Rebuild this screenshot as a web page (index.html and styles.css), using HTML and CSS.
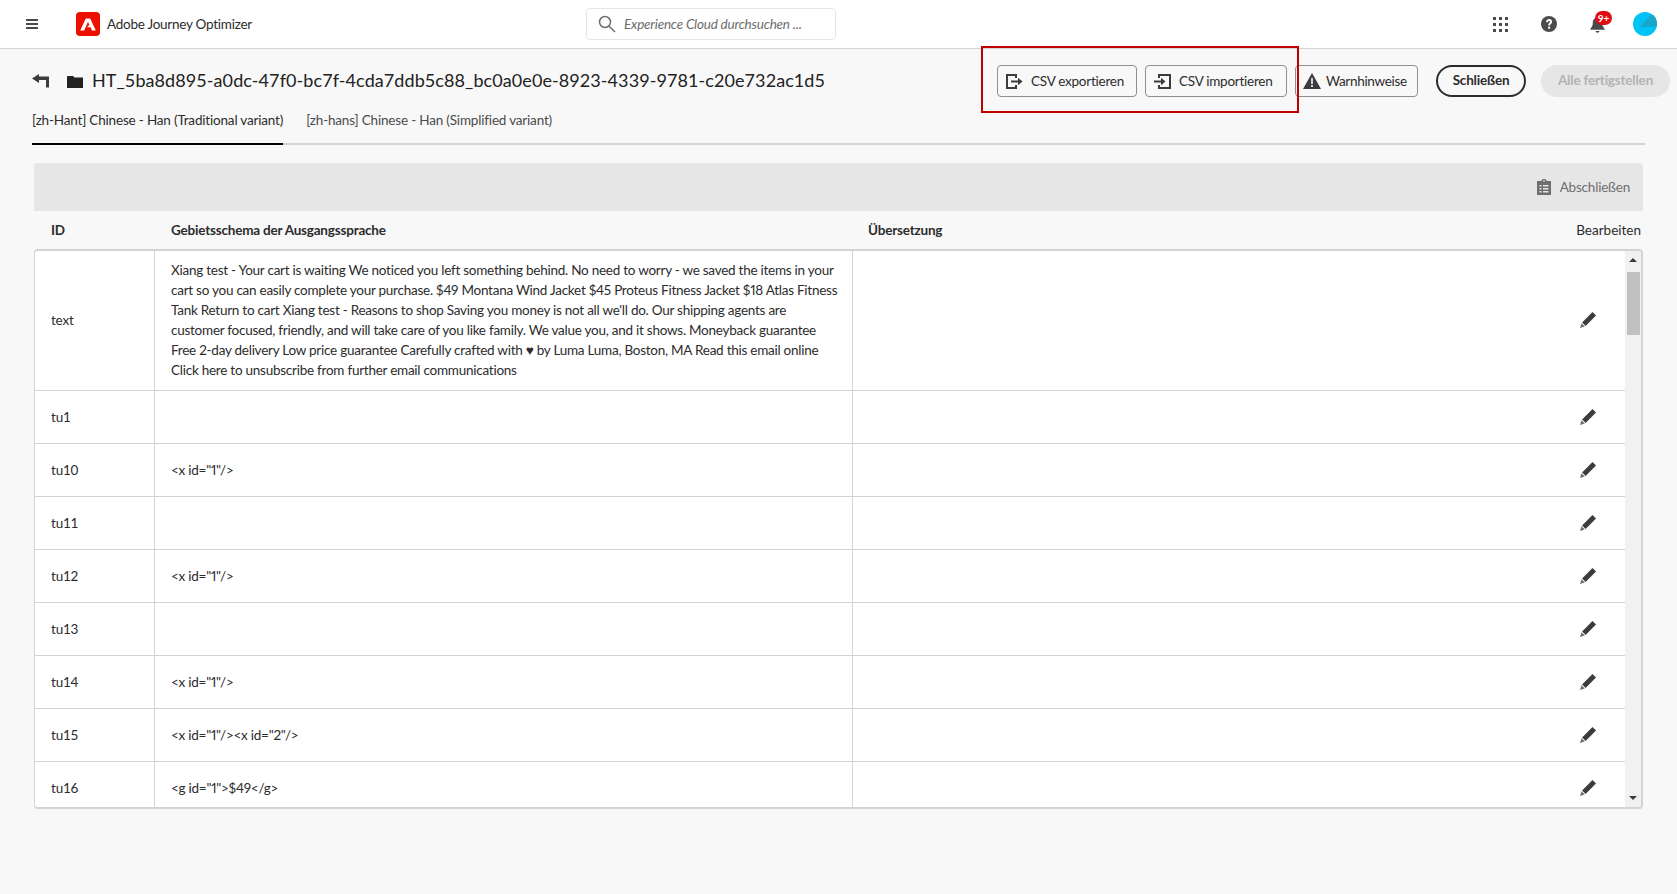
FILE: index.html
```html
<!DOCTYPE html>
<html lang="de">
<head>
<meta charset="utf-8">
<title>Adobe Journey Optimizer</title>
<link rel="stylesheet" href="styles.css">
</head>
<body>
<header class="shell">
  <svg class="menu" viewBox="0 0 12 10"><path d="M0 0h12v2H0zM0 4h12v2H0zM0 8h12v2H0z"/></svg>
  <svg class="logo" viewBox="0 0 24 24"><rect width="24" height="24" rx="4" fill="#eb1000"/><path fill="#fff" d="M9.800 6.500h4.400L19.800 18.500h-3.900l-1.300-3.200h-3.700l2.400-2.300-1.300-3.300-3.800 8.800H4.200z"/></svg>
  <span class="product">Adobe Journey Optimizer</span>
  <div class="search">
    <svg class="search-icon" viewBox="0 0 18 18"><circle cx="7" cy="7" r="5.500" fill="none" stroke="#6e6e6e" stroke-width="1.500"/><path d="M11 11l6 6" stroke="#6e6e6e" stroke-width="1.500"/></svg>
    <span>Experience Cloud durchsuchen ...</span>
  </div>
  <div class="shell-actions">
    <svg class="apps" viewBox="0 0 15 15" fill="#4b4b4b"><path d="M0 0h3v3H0zM6 0h3v3H6zM12 0h3v3h-3zM0 6h3v3H0zM6 6h3v3H6zM12 6h3v3h-3zM0 12h3v3H0zM6 12h3v3H6zM12 12h3v3h-3z"/></svg>
    <svg class="help" viewBox="0 0 18 18"><circle cx="9" cy="9" r="9" fill="#4b4b4b"/><path d="M5.800 7c0-2.200 1.500-3.500 3.400-3.500 2 0 3.300 1.200 3.300 3 0 2.400-2.300 2.500-2.300 4.300H8.100c0-2.800 2.100-2.800 2.100-4.200 0-.7-.5-1.100-1.100-1.100-.7 0-1.200.6-1.200 1.500z" fill="#fff"/><rect x="8" y="12" width="2.300" height="2.300" fill="#fff"/></svg>
    <div class="bell">
      <svg viewBox="0 0 18 18" fill="#4b4b4b"><path d="M9 .5c1 0 1.500.7 1.500 1.400 2.500.6 3.500 2.700 3.500 5.100 0 3 .6 4.500 2.500 6.500v1H1.500v-1C3.400 11.500 4 10 4 7c0-2.400 1-4.500 3.500-5.100C7.500 1.200 8 .5 9 .5zM7 16h4c0 1-.9 1.800-2 1.800S7 17 7 16z"/></svg>
      <span class="badge">9+</span>
    </div>
    <svg class="avatar" viewBox="0 0 24 24"><defs><clipPath id="avatar-clip"><circle cx="12" cy="12" r="12"/></clipPath></defs><circle cx="12" cy="12" r="12" fill="#00c3f5"/><path d="M18 3L6.300 14.700H24V3z" fill="#1aa6c9" clip-path="url(#avatar-clip)"/></svg>
  </div>
</header>

<main class="page">
  <div class="titlebar">
    <svg class="back" viewBox="0 0 17 14"><path fill="#3c3c3c" d="M0 4.500L7 0v2.500h10V13.500h-3V6H7v3z"/></svg>
    <svg class="folder" viewBox="0 0 16 12"><path fill="#222" d="M0 1C0 .4.400 0 1 0h5l1.500 1.500H16V12H0z"/></svg>
    <h1>HT_5ba8d895-a0dc-47f0-bc7f-4cda7ddb5c88_bc0a0e0e-8923-4339-9781-c20e732ac1d5</h1>
    <div class="actions">
      <button class="btn btn-export">
        <svg viewBox="0 0 17 15"><path d="M10 4V1H1v13h9v-3" fill="none" stroke="#3c3c3c" stroke-width="2"/><path d="M5 6.500h7V3.800l4.500 3.700-4.500 3.700V8.500H5z" fill="#3c3c3c"/></svg>
        CSV exportieren
      </button>
      <button class="btn btn-import">
        <svg viewBox="0 0 17 15"><path d="M5 4V1h11v13H5v-3" fill="none" stroke="#3c3c3c" stroke-width="2"/><path d="M0 6.500h7V3.800l4.500 3.700L7 11.200V8.500H0z" fill="#3c3c3c"/></svg>
        CSV importieren
      </button>
      <button class="btn btn-warn">
        <svg viewBox="0 0 18 16"><path fill="#3c3c3c" d="M9 0l9 16H0z"/><path fill="#f8f8f8" d="M8.200 5h1.600v6H8.200zM8.200 12h1.600v2H8.200z"/></svg>
        Warnhinweise
      </button>
      <button class="pill pill-close">Schließen</button>
      <button class="pill pill-done">Alle fertigstellen</button>
    </div>
    <div class="highlight"></div>
  </div>

  <nav class="tabs">
    <span class="tab tab-active">[zh-Hant] Chinese - Han (Traditional variant)</span>
    <span class="tab">[zh-hans] Chinese - Han (Simplified variant)</span>
  </nav>

  <div class="toolbar">
    <svg viewBox="0 0 14 16"><path fill="#6e6e6e" d="M4.500 2V1.500C4.500.7 5.500 0 7 0s2.500.7 2.500 1.500V2H14v14H0V2zM6 2.500h2V1.500H6zM2.500 6v1.500h2V6zM6 6v1.500h5.500V6zM2.500 9v1.500h2V9zM6 9v1.500h5.500V9zM2.500 12v1.500h2V12zM6 12v1.500h5.500V12z" fill-rule="evenodd"/></svg>
    <span>Abschließen</span>
  </div>

  <div class="thead">
    <span class="th-id">ID</span>
    <span class="th-src">Gebietsschema der Ausgangssprache</span>
    <span class="th-trans">Übersetzung</span>
    <span class="th-edit">Bearbeiten</span>
  </div>

  <div class="tbody">
    <div class="rows">
      <div class="row row-tall">
        <div class="cell c-id">text</div>
        <div class="cell c-src"><span>Xiang test - Your cart is waiting We noticed you left something behind. No need to worry - we saved the items in your<br>cart so you can easily complete your purchase. $49 Montana Wind Jacket $45 Proteus Fitness Jacket $18 Atlas Fitness<br>Tank Return to cart Xiang test - Reasons to shop Saving you money is not all we'll do. Our shipping agents are<br>customer focused, friendly, and will take care of you like family. We value you, and it shows. Moneyback guarantee<br>Free 2-day delivery Low price guarantee Carefully crafted with ♥ by Luma Luma, Boston, MA Read this email online<br>Click here to unsubscribe from further email communications</span></div>
        <div class="cell c-trans"><svg class="pencil" viewBox="0 0 16 16"><use href="#pen"/></svg></div>
      </div>
      <div class="row"><div class="cell c-id">tu1</div><div class="cell c-src"></div><div class="cell c-trans"><svg class="pencil" viewBox="0 0 16 16"><use href="#pen"/></svg></div></div>
      <div class="row"><div class="cell c-id">tu10</div><div class="cell c-src">&lt;x id="1"/&gt;</div><div class="cell c-trans"><svg class="pencil" viewBox="0 0 16 16"><use href="#pen"/></svg></div></div>
      <div class="row"><div class="cell c-id">tu11</div><div class="cell c-src"></div><div class="cell c-trans"><svg class="pencil" viewBox="0 0 16 16"><use href="#pen"/></svg></div></div>
      <div class="row"><div class="cell c-id">tu12</div><div class="cell c-src">&lt;x id="1"/&gt;</div><div class="cell c-trans"><svg class="pencil" viewBox="0 0 16 16"><use href="#pen"/></svg></div></div>
      <div class="row"><div class="cell c-id">tu13</div><div class="cell c-src"></div><div class="cell c-trans"><svg class="pencil" viewBox="0 0 16 16"><use href="#pen"/></svg></div></div>
      <div class="row"><div class="cell c-id">tu14</div><div class="cell c-src">&lt;x id="1"/&gt;</div><div class="cell c-trans"><svg class="pencil" viewBox="0 0 16 16"><use href="#pen"/></svg></div></div>
      <div class="row"><div class="cell c-id">tu15</div><div class="cell c-src">&lt;x id="1"/&gt;&lt;x id="2"/&gt;</div><div class="cell c-trans"><svg class="pencil" viewBox="0 0 16 16"><use href="#pen"/></svg></div></div>
      <div class="row"><div class="cell c-id">tu16</div><div class="cell c-src">&lt;g id="1"&gt;$49&lt;/g&gt;</div><div class="cell c-trans"><svg class="pencil" viewBox="0 0 16 16"><use href="#pen"/></svg></div></div>
    </div>
    <div class="scrollbar">
      <span class="arrow-up"></span>
      <span class="thumb"></span>
      <span class="arrow-down"></span>
    </div>
  </div>
</main>

<svg class="defs" aria-hidden="true"><defs><g id="pen"><path fill="#3c3c3c" d="M12.500 0L16 3.500 5.600 13.900 2.100 10.400z"/><path fill="#6e6e6e" d="M1.500 11.200l3.300 3.300L0 16z"/></g></defs></svg>
</body>
</html>
```
FILE: styles.css
```css
* { box-sizing: border-box; }
html, body { margin: 0; padding: 0; }
body {
  width: 1677px;
  height: 894px;
  overflow: hidden;
  background: #f8f8f8;
  color: #2c2c2c;
  font-family: "Lato", "Liberation Sans", sans-serif;
  font-size: 13.5px;
  letter-spacing: -0.2px;
}
.defs { width: 0; height: 0; display: block; }

.shell {
  height: 49px;
  background: #fff;
  border-bottom: 1px solid #d3d3d3;
  display: flex;
  align-items: center;
  padding-left: 26px;
}
.menu { width: 12px; height: 10px; fill: #4b4b4b; margin-right: 38px; }
.logo { width: 24px; height: 24px; margin-right: 7px; }
.product { color: #2c2c2c; width: 479px; letter-spacing: -0.25px; }
.search {
  width: 250px;
  height: 32px;
  background: #fff;
  border: 1px solid #e6e6e6;
  border-radius: 4px;
  display: flex;
  align-items: center;
  padding-left: 11px;
  gap: 8px;
  color: #6e6e6e;
  font-style: italic;
}
.search-icon { width: 18px; height: 18px; }
.shell-actions {
  margin-left: auto;
  display: flex;
  align-items: center;
  padding-right: 20px;
}
.apps { width: 15px; height: 15px; margin-right: 33px; }
.help { width: 16px; height: 16px; margin-right: 32px; }
.bell { width: 17px; height: 17px; position: relative; margin-right: 27px; }
.bell svg { width: 17px; height: 17px; display: block; }
.badge {
  position: absolute;
  left: 6px;
  top: -5px;
  width: 17px;
  height: 14px;
  border-radius: 7px;
  background: #e20a13;
  color: #fff;
  font-size: 10px;
  font-weight: 700;
  line-height: 14px;
  text-align: center;
  letter-spacing: 0;
}
.avatar { width: 24px; height: 24px; }

.page { padding: 0 32px; }
.titlebar {
  height: 49px;
  margin-top: 16px;
  display: flex;
  align-items: flex-start;
  position: relative;
  margin-right: -32px;
}
.back { width: 17px; height: 14px; margin-top: 9px; margin-right: 18px; }
.folder { width: 16px; height: 12px; margin-top: 11px; margin-right: 9px; }
h1 {
  margin: 0;
  font-size: 18px;
  font-weight: 400;
  letter-spacing: 0.08px;
  color: #222;
  line-height: 31px;
  white-space: nowrap;
}
.actions {
  margin-left: auto;
  display: flex;
  padding-right: 7px;
}
.btn {
  height: 32px;
  border: 1px solid #8e8e8e;
  border-radius: 4px;
  background: #f8f8f8;
  color: #2c2c2c;
  font: inherit;
  letter-spacing: inherit;
  display: flex;
  align-items: center;
  padding: 0;
}
.btn svg { width: 17px; height: 15px; }
.btn-export { width: 140px; padding-left: 8px; gap: 8px; margin-right: 8px; letter-spacing: -0.25px; }
.btn-import { width: 142px; padding-left: 8px; gap: 8px; margin-right: 8px; letter-spacing: -0.25px; }
.btn-warn { width: 123px; padding-left: 7px; gap: 5px; margin-right: 18px; letter-spacing: -0.3px; }
.btn-warn svg { width: 18px; height: 16px; }
.pill {
  height: 32px;
  border-radius: 16px;
  font: inherit;
  font-weight: 700;
  letter-spacing: inherit;
  padding: 0 0 2px;
}
.pill-close {
  width: 90px;
  border: 2px solid #2c2c2c;
  background: #f8f8f8;
  color: #2c2c2c;
  margin-right: 15px;
}
.pill-done {
  width: 129px;
  border: 0;
  background: #e6e6e6;
  color: #b3b3b3;
}
.highlight {
  position: absolute;
  left: 949px;
  top: -19px;
  width: 318px;
  height: 67px;
  border: 2px solid #c00000;
  pointer-events: none;
}

.tabs {
  display: flex;
  height: 32px;
  border-bottom: 2px solid #d3d3d3;
  width: 1613px;
  margin-top: -1px;
  gap: 23px;
  letter-spacing: -0.18px;
}
.tab { color: #4b4b4b; line-height: 14px; height: 32px; white-space: nowrap; }
.tab-active { color: #2c2c2c; border-bottom: 2px solid #000; }

.toolbar {
  height: 48px;
  margin: 18px 0 0 2px;
  width: 1609px;
  background: #e6e6e6;
  border-radius: 3px 3px 0 0;
  display: flex;
  align-items: center;
  justify-content: flex-end;
  padding-right: 13px;
  gap: 9px;
  color: #6e6e6e;
}
.toolbar svg { width: 14px; height: 16px; }

.thead {
  height: 38px;
  margin-left: 2px;
  width: 1609px;
  display: flex;
  align-items: center;
}
.th-id { width: 120px; padding-left: 17px; font-weight: 700; }
.th-src { width: 698px; padding-left: 17px; font-weight: 700; }
.th-trans { flex: 1; padding-left: 16px; font-weight: 700; }
.th-edit { padding-right: 2px; letter-spacing: 0; }

.tbody {
  height: 560px;
  margin-left: 2px;
  width: 1609px;
  background: #fff;
  border: 1px solid #d3d3d3;
  border-width: 2px 2px 2px 1px;
  border-radius: 4px;
  display: flex;
  overflow: hidden;
}
.rows { flex: 1; overflow: hidden; }
.row {
  height: 53px;
  display: flex;
  border-bottom: 1px solid #d3d3d3;
}
.row-tall { height: 140px; }
.row-tall .cell { padding-bottom: 2px; }
.cell { display: flex; align-items: center; }
.c-id { width: 120px; padding-left: 16px; border-right: 1px solid #d3d3d3; }
.c-src {
  width: 698px;
  padding-left: 16px;
  padding-right: 4px;
  border-right: 1px solid #d3d3d3;
  line-height: 20px;
  letter-spacing: -0.25px;
  font-variant-numeric: proportional-nums;
}
.c-trans { flex: 1; justify-content: flex-end; padding-right: 29px; }
.pencil { width: 16px; height: 16px; }
.scrollbar {
  width: 16px;
  background: #f1f1f1;
  display: flex;
  flex-direction: column;
  align-items: center;
}
.arrow-up {
  margin-top: 7px;
  width: 0;
  height: 0;
  border: 4px solid transparent;
  border-top: 0;
  border-bottom: 4px solid #3c3c3c;
}
.thumb {
  width: 13px;
  height: 63px;
  background: #c1c1c1;
  margin-top: 10px;
}
.arrow-down {
  margin-top: auto;
  margin-bottom: 7px;
  width: 0;
  height: 0;
  border: 4px solid transparent;
  border-bottom: 0;
  border-top: 4px solid #3c3c3c;
}
```
